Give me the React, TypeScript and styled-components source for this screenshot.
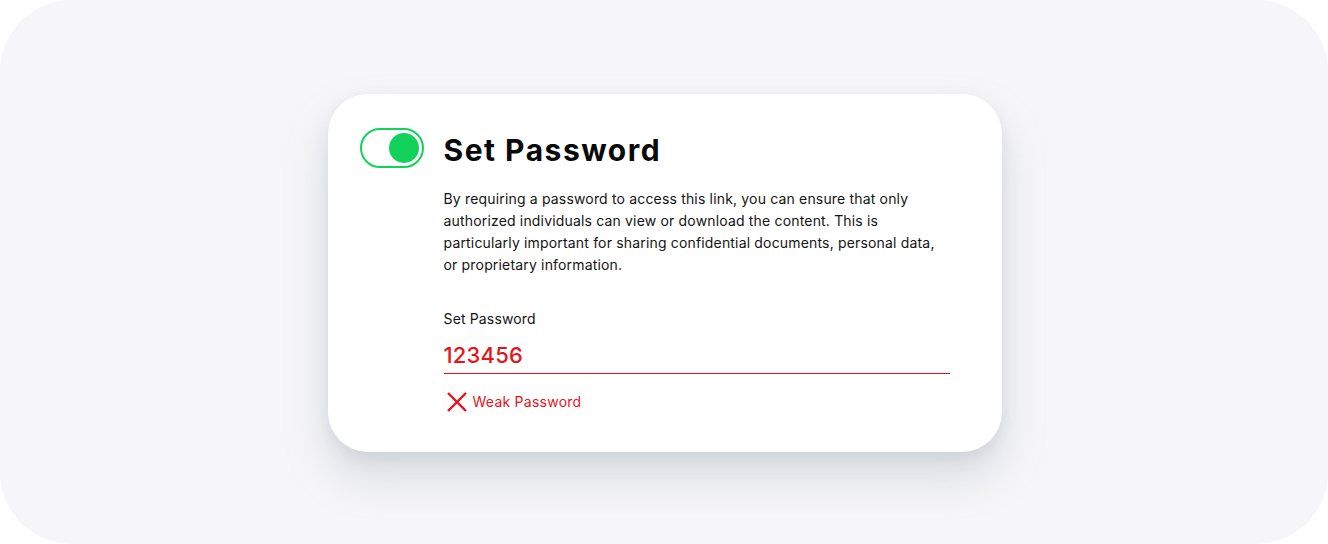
import styled, { createGlobalStyle } from "styled-components";

const GlobalStyle = createGlobalStyle`
  html, body {
    margin: 0;
    padding: 0;
    background: #ffffff;
    font-family: "Inter", "Noto Sans", sans-serif;
  }
`;

const Stage = styled.div`
  width: 1328px;
  height: 544px;
  box-sizing: border-box;
  background: #f6f6f8;
  border-radius: 72px;
  display: flex;
  justify-content: center;
  padding: 94px 0 0 1px;
`;

const Card = styled.div`
  width: 674px;
  height: 358px;
  box-sizing: border-box;
  background: #ffffff;
  border-radius: 40px;
  box-shadow: 0 24px 40px rgba(160, 166, 184, 0.35), 0 6px 14px rgba(160, 166, 184, 0.18);
  padding: 34px 52px 0 32px;
  display: flex;
  gap: 20px;
`;

const Toggle = styled.div<{ $on: boolean }>`
  flex: none;
  width: 64px;
  height: 40px;
  box-sizing: border-box;
  border: 2px solid ${(p) => (p.$on ? "#12d25c" : "#c8c8cc")};
  border-radius: 20px;
  display: flex;
  align-items: center;
  justify-content: ${(p) => (p.$on ? "flex-end" : "flex-start")};
  padding: 0 3px;
`;

const Knob = styled.div`
  width: 30px;
  height: 30px;
  border-radius: 50%;
  background: #12d25c;
`;

const Body = styled.div`
  flex: 1;
  display: flex;
  flex-direction: column;
`;

const Title = styled.h1`
  margin: 0;
  height: 40px;
  padding-top: 4px;
  box-sizing: border-box;
  display: flex;
  align-items: center;
  font-family: "Inter", sans-serif;
  font-weight: 700;
  font-size: 30px;
  letter-spacing: 1.5px;
  color: #0a0a0a;
`;

const Description = styled.p`
  margin: 20px 0 0;
  font-size: 14px;
  line-height: 22px;
  letter-spacing: 0.17px;
  color: #141414;
`;

const Label = styled.div`
  margin-top: 32px;
  font-size: 14px;
  line-height: 22px;
  letter-spacing: 0.15px;
  color: #141414;
`;

const Field = styled.div<{ $error: boolean }>`
  margin-top: 10px;
  padding-bottom: 4px;
  font-size: 22px;
  font-weight: 500;
  line-height: 30px;
  color: ${(p) => (p.$error ? "#e8131a" : "#141414")};
  letter-spacing: 0.2px;
  box-shadow: inset 0 -1px 0 ${(p) => (p.$error ? "#e8131a" : "#d0d0d4")};
`;

const Hint = styled.div`
  margin-top: 17px;
  display: flex;
  align-items: center;
  gap: 5px;
  font-size: 14px;
  line-height: 22px;
  letter-spacing: 0.25px;
  color: #e8131a;
  svg {
    margin-left: 2px;
  }
`;

export default function App() {
  return (
    <>
      <GlobalStyle />
      <Stage>
        <Card>
          <Toggle $on>
            <Knob />
          </Toggle>
          <Body>
            <Title>Set Password</Title>
            <Description>
              By requiring a password to access this link, you can ensure that only authorized
              individuals can view or download the content. This is particularly important for
              sharing confidential documents, personal data, or proprietary information.
            </Description>
            <Label>Set Password</Label>
            <Field $error>123456</Field>
            <Hint>
              <svg width="22" height="22" viewBox="0 0 22 22">
                <path d="M2 2 L20 20 M20 2 L2 20" stroke="#e8131a" strokeWidth="2.4" fill="none" />
              </svg>
              Weak Password
            </Hint>
          </Body>
        </Card>
      </Stage>
    </>
  );
}
